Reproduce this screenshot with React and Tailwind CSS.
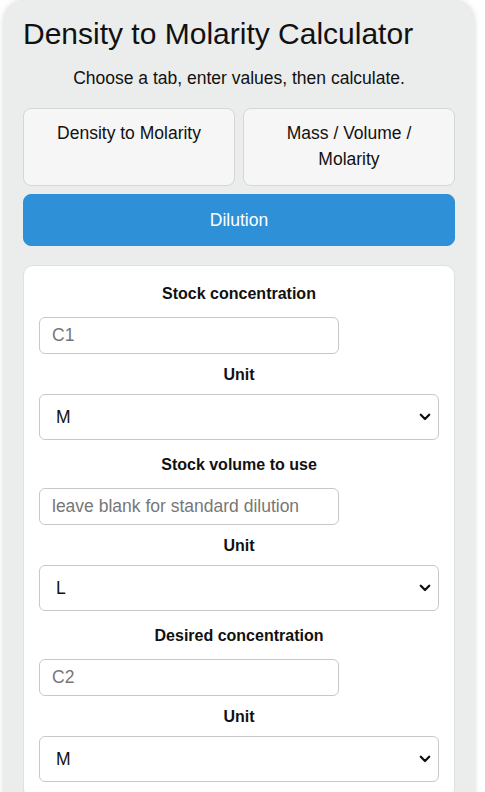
import { useState } from 'react';

const Chevron = () => (
  <svg className="pointer-events-none absolute right-[8px] top-1/2 -translate-y-1/2" width="12" height="8" viewBox="0 0 12 8">
    <path d="M1.8 1.8 L6 6 L10.2 1.8" fill="none" stroke="#111" strokeWidth="2.3" strokeLinecap="round" strokeLinejoin="round" />
  </svg>
);

const Field = ({ label, placeholder, unit, options, first }) => (
  <div className={first ? '' : 'mt-[15px]'}>
    <div className="text-center text-[16px] font-bold leading-5 text-[#111] mb-[13px]">{label}</div>
    <input
      placeholder={placeholder}
      className="block w-[300px] h-[37px] rounded-[6px] border border-[#c8c8c8] bg-white px-3 text-[17.5px] text-[#111] placeholder:text-[#777] outline-none"
    />
    <div className="mt-[11px] mb-[9px] text-center text-[16px] font-bold leading-5 text-[#111]">Unit</div>
    <div className="relative">
      <select
        defaultValue={unit}
        className="block w-full h-[46px] appearance-none rounded-[6px] border border-[#c8c8c8] bg-white pl-4 pr-8 text-[17.5px] text-[#111] outline-none"
      >
        {options.map((o) => <option key={o}>{o}</option>)}
      </select>
      <Chevron />
    </div>
  </div>
);

const App = () => {
  const [tab, setTab] = useState('dilution');
  const concUnits = ['M', 'mM', 'µM', 'nM'];
  const volUnits = ['L', 'mL', 'µL'];

  const tabCls = (id) =>
    id === tab
      ? 'rounded-[8px] border border-[#2e91d8] bg-[#2e91d8] text-white'
      : 'rounded-[8px] border border-[#d6d6d6] bg-[#f6f6f6] text-[#111]';

  return (
    <div className="min-h-screen bg-white" style={{ fontFamily: '"Liberation Sans", Arial, sans-serif' }}>
      <div className="ml-[4px] w-[470px] min-h-[792px] rounded-t-[22px] bg-[#ebecec] px-[19px] pt-[16px] shadow-[0_0_6px_rgba(0,0,0,0.18)]">
        <h1 className="text-[30px] leading-[36px] font-normal text-[#111]">Density to Molarity Calculator</h1>
        <p className="mt-[15px] text-center text-[17.5px] leading-[22px] text-[#111]">Choose a tab, enter values, then calculate.</p>

        <div className="mt-[19px] grid grid-cols-2 gap-2">
          <button onClick={() => setTab('density')} className={`${tabCls('density')} h-[78px] px-3 pt-[11px] text-[17.5px] leading-[26px] flex flex-col items-center justify-start`}>
            Density to Molarity
          </button>
          <button onClick={() => setTab('mass')} className={`${tabCls('mass')} h-[78px] px-3 pt-[11px] text-[17.5px] leading-[26px] flex flex-col items-center justify-start`}>
            <span>Mass / Volume /</span>
            <span>Molarity</span>
          </button>
          <button onClick={() => setTab('dilution')} className={`${tabCls('dilution')} col-span-2 h-[52px] text-[17.5px] leading-[26px]`}>
            Dilution
          </button>
        </div>

        <div className="mt-[19px] rounded-[10px] border border-[#e0e0e0] bg-white px-[15px] pt-[18px] pb-4">
          <Field first label="Stock concentration" placeholder="C1" unit="M" options={concUnits} />
          <Field label="Stock volume to use" placeholder="leave blank for standard dilution" unit="L" options={volUnits} />
          <Field label="Desired concentration" placeholder="C2" unit="M" options={concUnits} />
        </div>
      </div>
    </div>
  );
};

export default App;
